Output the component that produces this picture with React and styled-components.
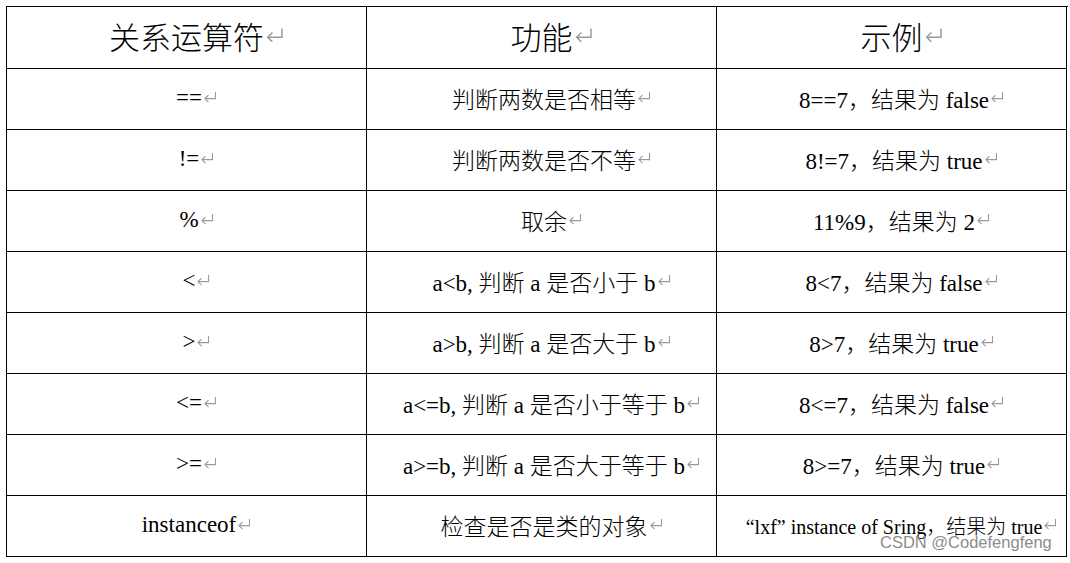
import React from "react";
import styled, { createGlobalStyle } from "styled-components";

const ROWS = [
  ["==", "判断两数是否相等", "8==7，结果为 false"],
  ["!=", "判断两数是否不等", "8!=7，结果为 true"],
  ["%", "取余", "11%9，结果为 2"],
  ["<", "a<b, 判断 a 是否小于 b", "8<7，结果为 false"],
  [">", "a>b, 判断 a 是否大于 b", "8>7，结果为 true"],
  ["<=", "a<=b, 判断 a 是否小于等于 b", "8<=7，结果为 false"],
  [">=", "a>=b, 判断 a 是否大于等于 b", "8>=7，结果为 true"],
  ["instanceof", "检查是否是类的对象", "“lxf” instance of Sring，结果为 true"],
];

const ReturnMark = ({ size = 14 }) => (
  <MarkSvg width={size} height={size * 0.8} viewBox="0 0 14 11">
    <path d="M12.5 1 V7.5 H2" fill="none" stroke="#9a9a9a" strokeWidth="1.1" />
    <path d="M5.5 4 L2 7.5 L5.5 11" fill="none" stroke="#9a9a9a" strokeWidth="1.1" />
  </MarkSvg>
);

const App = () => {
  return (
    <Page>
      <GlobalStyle />
      <Table>
        <Row head>
          <Cell head>
            关系运算符
            <ReturnMark size={19} />
          </Cell>
          <Cell head>
            功能
            <ReturnMark size={19} />
          </Cell>
          <Cell head>
            示例
            <ReturnMark size={19} />
          </Cell>
        </Row>
        {ROWS.map((r, i) => (
          <Row key={i}>
            {r.map((t, j) => (
              <Cell key={j} small={j === 2 && i === 7}>
                {t}
                <ReturnMark />
              </Cell>
            ))}
          </Row>
        ))}
      </Table>
      <Watermark>CSDN @Codefengfeng</Watermark>
    </Page>
  );
};

export default App;

const GlobalStyle = createGlobalStyle`
  html, body {
    margin: 0;
    padding: 0;
    background: #ffffff;
  }
`;

const Page = styled.div`
  position: relative;
  width: 1070px;
  height: 563px;
  padding: 6px 0 0 6px;
  box-sizing: border-box;
  background: #ffffff;
  font-family: "Liberation Serif", "Noto Sans CJK SC", serif;
  color: #000;
`;

const Table = styled.div`
  display: flex;
  flex-direction: column;
  width: 1061px;
  border-left: 1px solid #000;
  border-top: 1px solid #000;
`;

const Row = styled.div`
  position: relative;
  display: grid;
  grid-template-columns: 360px 350px 350px;
  height: ${({ head }) => (head ? "62px" : "61px")};

  &::after {
    content: "";
    position: absolute;
    right: -4px;
    top: ${({ head }) => (head ? "22px" : "27px")};
    width: 2px;
    height: 3px;
    background: #b5b5b5;
  }
`;

const Cell = styled.div`
  display: flex;
  align-items: center;
  justify-content: center;
  border-right: 1px solid #000;
  border-bottom: 1px solid #000;
  font-size: ${({ head, small }) => (head ? "31px" : small ? "20px" : "23px")};
  font-weight: 300;
  white-space: nowrap;
  padding: ${({ head }) => (head ? "0 0 4px 20px" : "0 0 2px 20px")};
  box-sizing: border-box;
`;

const MarkSvg = styled.svg`
  margin-left: 1px;
  margin-top: -2px;
  flex: none;
`;

const Watermark = styled.div`
  position: absolute;
  left: 880px;
  top: 533px;
  font-family: "Liberation Sans", "DejaVu Sans", sans-serif;
  font-size: 16.5px;
  color: #8c8c8c;
`;
